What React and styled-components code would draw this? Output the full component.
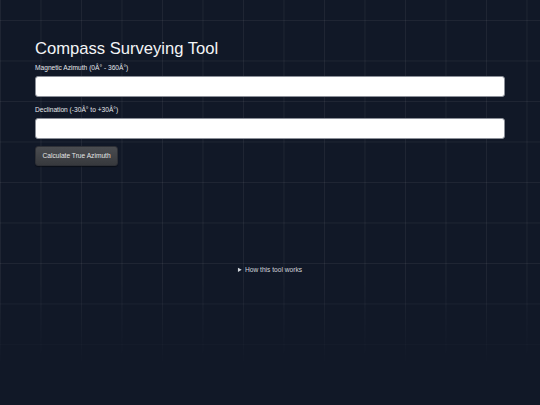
import React from "react";
import styled, { createGlobalStyle } from "styled-components";

const Global = createGlobalStyle`
  html, body { margin: 0; padding: 0; background: #111827; }
  body { font-family: "Liberation Sans", Arial, sans-serif; color: #f3f4f6; }
  * { box-sizing: border-box; }
`;

const Page = styled.div`
  position: relative;
  width: 540px;
  height: 405px;
  overflow: hidden;
  background: #111827;
`;

const Grid = styled.div`
  position: absolute;
  inset: 0;
  pointer-events: none;
  background-image:
    linear-gradient(to right, rgba(255, 255, 255, 0.06) 1px, transparent 1px),
    linear-gradient(to bottom, rgba(255, 255, 255, 0.06) 1px, transparent 1px);
  background-size: 40.5px 40.5px;
  background-position: 0 20px;
  -webkit-mask-image: linear-gradient(to bottom, #000 0, #000 280px, transparent 370px);
  mask-image: linear-gradient(to bottom, #000 0, #000 280px, transparent 370px);
`;

const Content = styled.main`
  position: relative;
  padding: 38.5px 35px 0 35px;
  display: flex;
  flex-direction: column;
`;

const Title = styled.h1`
  margin: 0;
  font-size: 16.6px;
  line-height: 20px;
  font-weight: 400;
  color: #f3f4f6;
`;

const Field = styled.div`
  display: flex;
  flex-direction: column;
  margin-top: ${(p) => p.$top}px;
`;

const Label = styled.label`
  font-size: 6.64px;
  line-height: 8px;
  color: #e5e7eb;
  margin-bottom: 4px;
`;

const Input = styled.input`
  width: 470px;
  height: 21px;
  border: 1px solid #8b8f98;
  border-radius: 3px;
  background: #ffffff;
  padding: 0 5px;
  font-family: inherit;
  font-size: 7px;
  outline: none;
`;

const Button = styled.button`
  align-self: flex-start;
  margin-top: 7px;
  height: 20px;
  padding: 0 6.5px;
  border: 1px solid #2e3036;
  border-radius: 3px;
  background: linear-gradient(to bottom, #4a4c50, #37393d);
  box-shadow: 0 1px 1px rgba(0, 0, 0, 0.4);
  color: #e5e5e5;
  font-family: inherit;
  font-size: 6.64px;
  cursor: pointer;
`;

const Details = styled.details`
  margin-top: 100px;
  font-size: 6.64px;
  line-height: 8px;
  color: #d1d5db;
`;

const Summary = styled.summary`
  text-align: center;
  cursor: pointer;
`;

export default function App() {
  return (
    <>
      <Global />
      <Page>
        <Grid />
        <Content>
          <Title>Compass Surveying Tool</Title>
          <Field $top={5.5}>
            <Label htmlFor="mag">Magnetic Azimuth (0Â° - 360Â°)</Label>
            <Input id="mag" type="text" />
          </Field>
          <Field $top={8.5}>
            <Label htmlFor="dec">Declination (-30Â° to +30Â°)</Label>
            <Input id="dec" type="text" />
          </Field>
          <Button>Calculate True Azimuth</Button>
          <Details>
            <Summary>How this tool works</Summary>
          </Details>
        </Content>
      </Page>
    </>
  );
}
